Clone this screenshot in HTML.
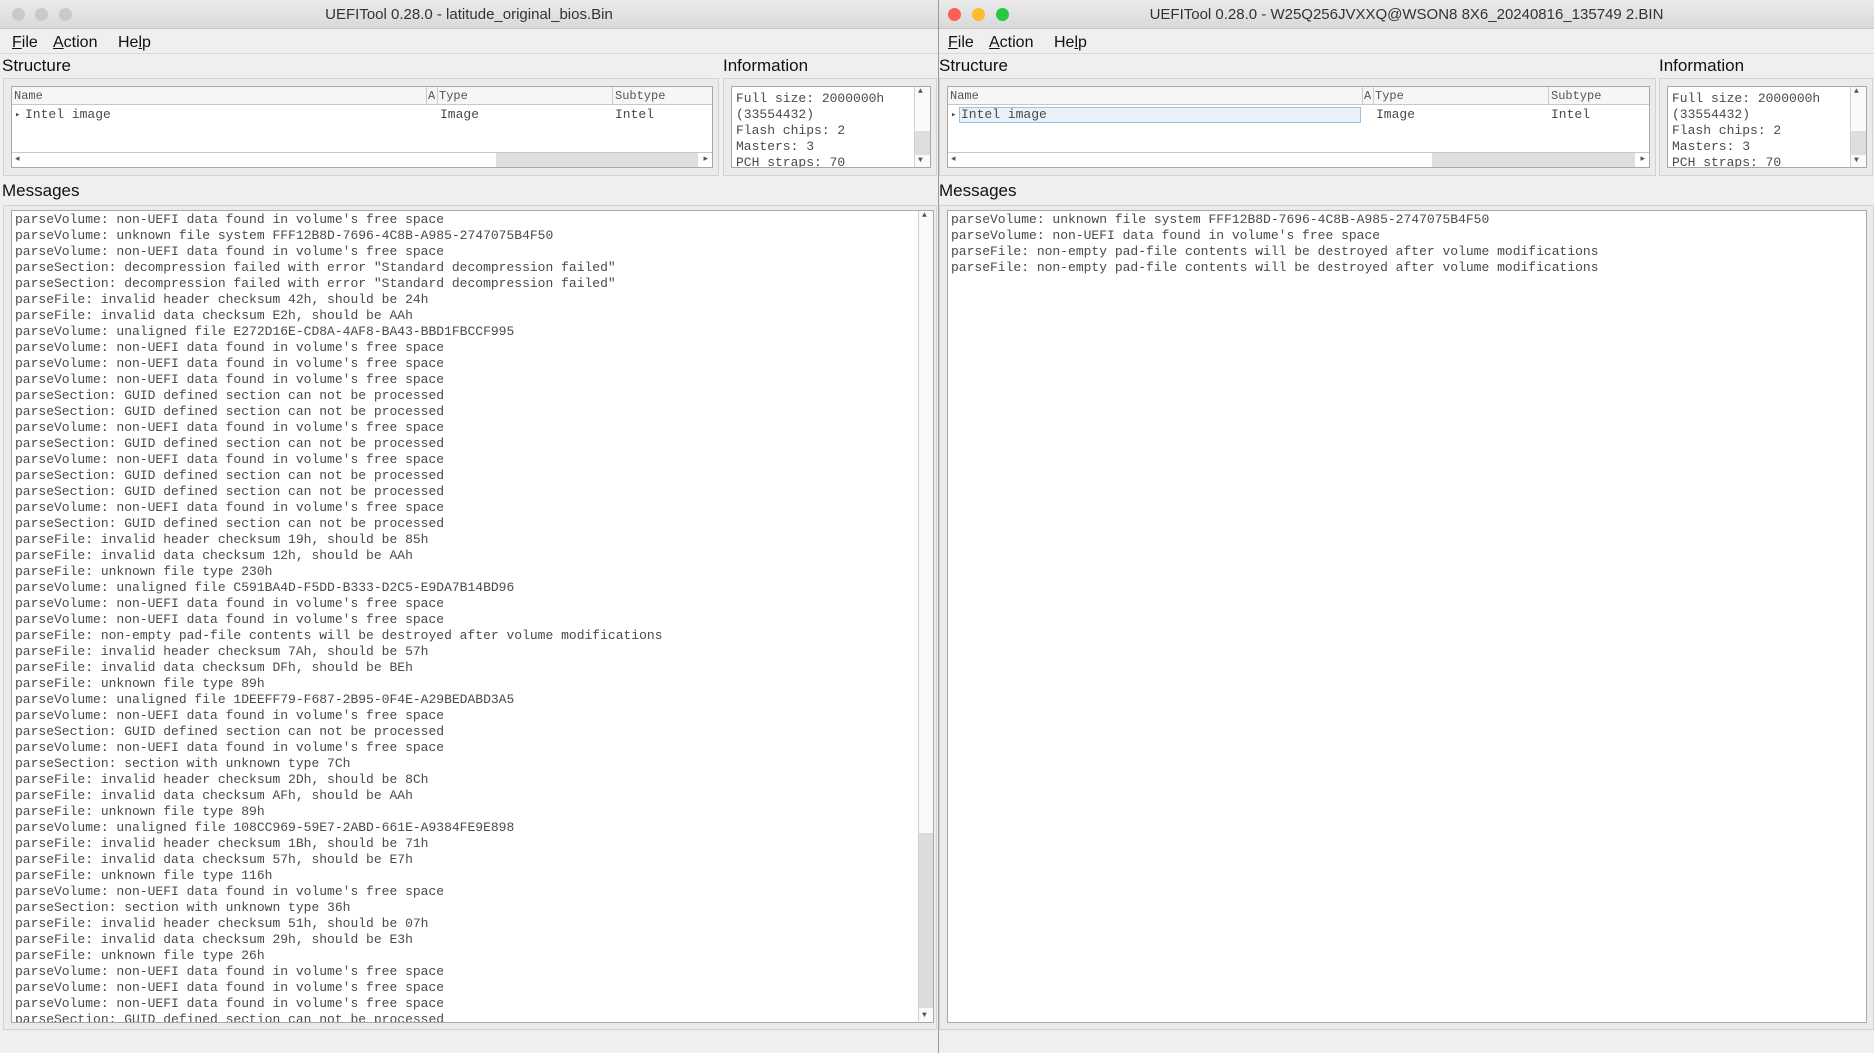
<!DOCTYPE html>
<html><head><meta charset="utf-8"><style>
*{margin:0;padding:0;box-sizing:border-box}
body{width:1874px;height:1053px;overflow:hidden;background:#ececec;font-family:"Liberation Sans",sans-serif;position:relative}
.win{position:absolute;top:0;height:1053px;background:#efefef;overflow:hidden}
.title{position:absolute;left:0;right:0;top:0;height:29px;background:linear-gradient(#ebebeb,#d9d9d9);border-bottom:1px solid #c4c4c4;text-align:center;font-size:15px;line-height:29px;color:#333}
.dot{position:absolute;top:8px;width:13px;height:13px;border-radius:50%}
.menu{position:absolute;top:31px;left:0;right:0;height:23px;font-size:16px;color:#111;border-bottom:1px solid #dadada}
.menu span{position:absolute;top:3px}
.lbl{position:absolute;font-size:17px;color:#111}
.box{position:absolute;border:1px solid #d2d2d2;background:#ebebeb}
.inner{position:absolute;background:#fff;border:1px solid #a8a8a8;overflow:hidden}
.mono{font-family:"Liberation Mono",monospace;font-size:13px;color:#4a4a4a}
.hdr{position:absolute;top:0;left:0;right:0;height:18px;border-bottom:1px solid #c8c8c8;background:#f6f6f6;font-family:"Liberation Mono",monospace;font-size:12px;color:#555;line-height:18px}
.hdr span,.row span{position:absolute}
.row{position:absolute;top:19px;left:0;right:0;height:18px;line-height:18px}
.hs{position:absolute;left:0;right:0;bottom:0;height:15px;border-top:1px solid #c8c8c8;background:#fff}
.vs{position:absolute;top:0;right:0;bottom:0;width:16px;border-left:1px solid #d0d0d0;background:#fafafa}
.msgs{position:absolute;left:3px;top:1px;line-height:16px;white-space:pre}
</style></head><body>

<div class="win" style="left:0;width:938px">
 <div class="title">UEFITool 0.28.0 - latitude_original_bios.Bin
  <div class="dot" style="left:12px;background:#c9c9c9"></div>
  <div class="dot" style="left:35px;background:#c9c9c9"></div>
  <div class="dot" style="left:59px;background:#c9c9c9"></div>
 </div>
 <div class="menu"><span style="left:12px"><u>F</u>ile</span><span style="left:53px"><u>A</u>ction</span><span style="left:118px">He<u>l</u>p</span></div>
 <div class="lbl" style="left:2px;top:56px">Structure</div>
 <div class="lbl" style="left:723px;top:56px">Information</div>
 <div class="box" style="left:3px;top:78px;width:716px;height:98px">
  <div class="inner" style="left:7px;top:7px;width:702px;height:82px">
   <div class="hdr"><span style="left:2px">Name</span><span style="left:414px;border-left:1px solid #ccc;height:18px"></span><span style="left:416px">A</span><span style="left:425px;border-left:1px solid #ccc;height:18px"></span><span style="left:427px">Type</span><span style="left:600px;border-left:1px solid #ccc;height:18px"></span><span style="left:603px">Subtype</span></div>
   <div class="row mono"><span style="left:3px;font-size:9px">▸</span><span style="left:13px">Intel image</span><span style="left:428px">Image</span><span style="left:603px">Intel</span></div>
   <div class="hs"><div style="position:absolute;left:484px;right:14px;top:0;bottom:0;background:#dedede"></div><span style="position:absolute;left:3px;top:0;font-size:9px;color:#555">◂</span><span style="position:absolute;right:4px;top:0;font-size:9px;color:#555">▸</span></div>
  </div>
 </div>
 <div class="box" style="left:723px;top:78px;width:214px;height:98px">
  <div class="inner mono" style="left:7px;top:7px;width:200px;height:82px">
   <div style="position:absolute;left:4px;top:4px;line-height:16px">Full size: 2000000h<br>(33554432)<br>Flash chips: 2<br>Masters: 3<br>PCH straps: 70</div>
   <div class="vs"><div style="position:absolute;left:0;right:0;top:44px;height:24px;background:#dedede"></div><span style="position:absolute;left:3px;top:0;font-size:8px;color:#555">▲</span><span style="position:absolute;left:3px;bottom:2px;font-size:8px;color:#555">▼</span></div>
  </div>
 </div>
 <div class="lbl" style="left:2px;top:181px">Messages</div>
 <div class="box" style="left:3px;top:205px;width:934px;height:825px">
  <div class="inner mono" style="left:7px;top:4px;width:923px;height:813px">
<div class="msgs">parseVolume: non-UEFI data found in volume's free space
parseVolume: unknown file system FFF12B8D-7696-4C8B-A985-2747075B4F50
parseVolume: non-UEFI data found in volume's free space
parseSection: decompression failed with error "Standard decompression failed"
parseSection: decompression failed with error "Standard decompression failed"
parseFile: invalid header checksum 42h, should be 24h
parseFile: invalid data checksum E2h, should be AAh
parseVolume: unaligned file E272D16E-CD8A-4AF8-BA43-BBD1FBCCF995
parseVolume: non-UEFI data found in volume's free space
parseVolume: non-UEFI data found in volume's free space
parseVolume: non-UEFI data found in volume's free space
parseSection: GUID defined section can not be processed
parseSection: GUID defined section can not be processed
parseVolume: non-UEFI data found in volume's free space
parseSection: GUID defined section can not be processed
parseVolume: non-UEFI data found in volume's free space
parseSection: GUID defined section can not be processed
parseSection: GUID defined section can not be processed
parseVolume: non-UEFI data found in volume's free space
parseSection: GUID defined section can not be processed
parseFile: invalid header checksum 19h, should be 85h
parseFile: invalid data checksum 12h, should be AAh
parseFile: unknown file type 230h
parseVolume: unaligned file C591BA4D-F5DD-B333-D2C5-E9DA7B14BD96
parseVolume: non-UEFI data found in volume's free space
parseVolume: non-UEFI data found in volume's free space
parseFile: non-empty pad-file contents will be destroyed after volume modifications
parseFile: invalid header checksum 7Ah, should be 57h
parseFile: invalid data checksum DFh, should be BEh
parseFile: unknown file type 89h
parseVolume: unaligned file 1DEEFF79-F687-2B95-0F4E-A29BEDABD3A5
parseVolume: non-UEFI data found in volume's free space
parseSection: GUID defined section can not be processed
parseVolume: non-UEFI data found in volume's free space
parseSection: section with unknown type 7Ch
parseFile: invalid header checksum 2Dh, should be 8Ch
parseFile: invalid data checksum AFh, should be AAh
parseFile: unknown file type 89h
parseVolume: unaligned file 108CC969-59E7-2ABD-661E-A9384FE9E898
parseFile: invalid header checksum 1Bh, should be 71h
parseFile: invalid data checksum 57h, should be E7h
parseFile: unknown file type 116h
parseVolume: non-UEFI data found in volume's free space
parseSection: section with unknown type 36h
parseFile: invalid header checksum 51h, should be 07h
parseFile: invalid data checksum 29h, should be E3h
parseFile: unknown file type 26h
parseVolume: non-UEFI data found in volume's free space
parseVolume: non-UEFI data found in volume's free space
parseVolume: non-UEFI data found in volume's free space
parseSection: GUID defined section can not be processed</div>
   <div class="vs" style="width:15px"><div style="position:absolute;left:0;right:0;top:622px;bottom:14px;background:#dcdcdc"></div><span style="position:absolute;left:3px;top:0;font-size:8px;color:#555">▲</span><span style="position:absolute;left:3px;bottom:2px;font-size:8px;color:#555">▼</span></div>
  </div>
 </div>
</div>
<div style="position:absolute;left:938px;top:0;width:1px;height:1053px;background:#9a9a9a"></div>

<div class="win" style="left:939px;width:935px">
 <div class="title">UEFITool 0.28.0 - W25Q256JVXXQ@WSON8 8X6_20240816_135749 2.BIN
  <div class="dot" style="left:9px;background:#fc5f57"></div>
  <div class="dot" style="left:33px;background:#fdbc2e"></div>
  <div class="dot" style="left:57px;background:#28c840"></div>
 </div>
 <div class="menu"><span style="left:9px"><u>F</u>ile</span><span style="left:50px"><u>A</u>ction</span><span style="left:115px">He<u>l</u>p</span></div>
 <div class="lbl" style="left:0px;top:56px">Structure</div>
 <div class="lbl" style="left:720px;top:56px">Information</div>
 <div class="box" style="left:0px;top:78px;width:717px;height:98px">
  <div class="inner" style="left:7px;top:7px;width:703px;height:82px">
   <div class="hdr"><span style="left:2px">Name</span><span style="left:414px;border-left:1px solid #ccc;height:18px"></span><span style="left:416px">A</span><span style="left:425px;border-left:1px solid #ccc;height:18px"></span><span style="left:427px">Type</span><span style="left:600px;border-left:1px solid #ccc;height:18px"></span><span style="left:603px">Subtype</span></div>
   <div class="row mono"><span style="left:3px;font-size:9px">▸</span><span style="left:11px;top:1px;width:402px;height:16px;background:#e8f1fa;border:1px solid #9cc0e0"></span><span style="left:13px">Intel image</span><span style="left:428px">Image</span><span style="left:603px">Intel</span></div>
   <div class="hs"><div style="position:absolute;left:484px;right:14px;top:0;bottom:0;background:#dedede"></div><span style="position:absolute;left:3px;top:0;font-size:9px;color:#555">◂</span><span style="position:absolute;right:4px;top:0;font-size:9px;color:#555">▸</span></div>
  </div>
 </div>
 <div class="box" style="left:720px;top:78px;width:214px;height:98px">
  <div class="inner mono" style="left:7px;top:7px;width:200px;height:82px">
   <div style="position:absolute;left:4px;top:4px;line-height:16px">Full size: 2000000h<br>(33554432)<br>Flash chips: 2<br>Masters: 3<br>PCH straps: 70</div>
   <div class="vs"><div style="position:absolute;left:0;right:0;top:44px;height:24px;background:#dedede"></div><span style="position:absolute;left:3px;top:0;font-size:8px;color:#555">▲</span><span style="position:absolute;left:3px;bottom:2px;font-size:8px;color:#555">▼</span></div>
  </div>
 </div>
 <div class="lbl" style="left:0px;top:181px">Messages</div>
 <div class="box" style="left:0px;top:205px;width:935px;height:825px">
  <div class="inner mono" style="left:7px;top:4px;width:920px;height:813px">
<div class="msgs">parseVolume: unknown file system FFF12B8D-7696-4C8B-A985-2747075B4F50
parseVolume: non-UEFI data found in volume's free space
parseFile: non-empty pad-file contents will be destroyed after volume modifications
parseFile: non-empty pad-file contents will be destroyed after volume modifications</div>
  </div>
 </div>
</div>
</body></html>
